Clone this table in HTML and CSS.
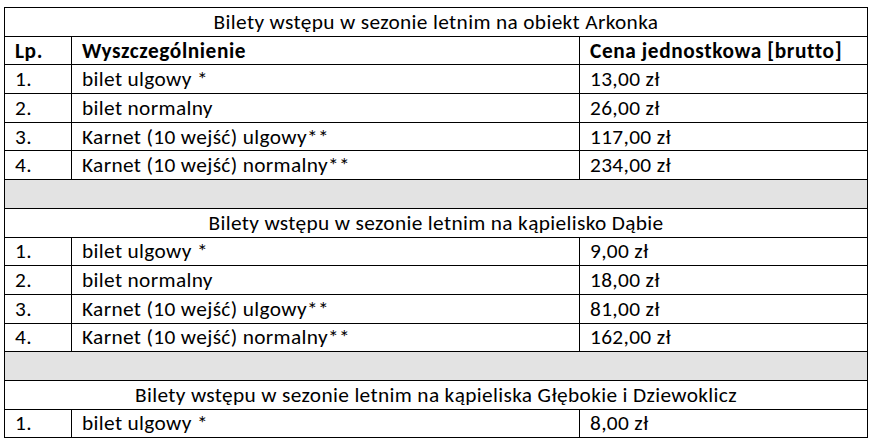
FILE: index.html
```html
<!DOCTYPE html>
<html lang="pl">
<head>
<meta charset="utf-8">
<link rel="stylesheet" href="styles.css">
</head>
<body>
<table class="prices">
  <colgroup>
    <col class="c-lp">
    <col class="c-name">
    <col class="c-price">
  </colgroup>
  <tr><td class="title" colspan="3">Bilety wstępu w sezonie letnim na obiekt Arkonka</td></tr>
  <tr class="head"><td>Lp.</td><td>Wyszczególnienie</td><td>Cena jednostkowa [brutto]</td></tr>
  <tr><td>1.</td><td>bilet ulgowy *</td><td>13,00 zł</td></tr>
  <tr><td>2.</td><td>bilet normalny</td><td>26,00 zł</td></tr>
  <tr><td>3.</td><td>Karnet (10 wejść) ulgowy**</td><td>117,00 zł</td></tr>
  <tr><td>4.</td><td>Karnet (10 wejść) normalny**</td><td>234,00 zł</td></tr>
  <tr><td class="gap" colspan="3"></td></tr>
  <tr><td class="title" colspan="3">Bilety wstępu w sezonie letnim na kąpielisko Dąbie</td></tr>
  <tr><td>1.</td><td>bilet ulgowy *</td><td>9,00 zł</td></tr>
  <tr><td>2.</td><td>bilet normalny</td><td>18,00 zł</td></tr>
  <tr><td>3.</td><td>Karnet (10 wejść) ulgowy**</td><td>81,00 zł</td></tr>
  <tr><td>4.</td><td>Karnet (10 wejść) normalny**</td><td>162,00 zł</td></tr>
  <tr><td class="gap" colspan="3"></td></tr>
  <tr><td class="title" colspan="3">Bilety wstępu w sezonie letnim na kąpieliska Głębokie i Dziewoklicz</td></tr>
  <tr><td>1.</td><td>bilet ulgowy *</td><td>8,00 zł</td></tr>
</table>
</body>
</html>
```
FILE: styles.css
```css
html, body {
  margin: 0;
  padding: 0;
  background: #ffffff;
}
body {
  padding: 7px 0 0 4px;
  font-family: Carlito, "Open Sans", "Liberation Sans", sans-serif;
  font-size: 21.33px;
  letter-spacing: 0.35px;
  color: #000;
}
.prices {
  border-collapse: collapse;
  table-layout: fixed;
  width: 863px;
}
.c-lp { width: 67px; }
.c-name { width: 508px; }
.c-price { width: 288px; }
.prices td {
  border: 1px solid #000;
  height: 27.7px;
  padding: 0 0 0 10px;
  vertical-align: middle;
  white-space: nowrap;
  line-height: 22px;
}
.prices td.title {
  text-align: center;
  padding: 0;
}
.prices td.gap {
  background: #e3e3e3;
  padding: 0;
}
.head td {
  font-weight: bold;
  letter-spacing: 0.6px;
}
```
